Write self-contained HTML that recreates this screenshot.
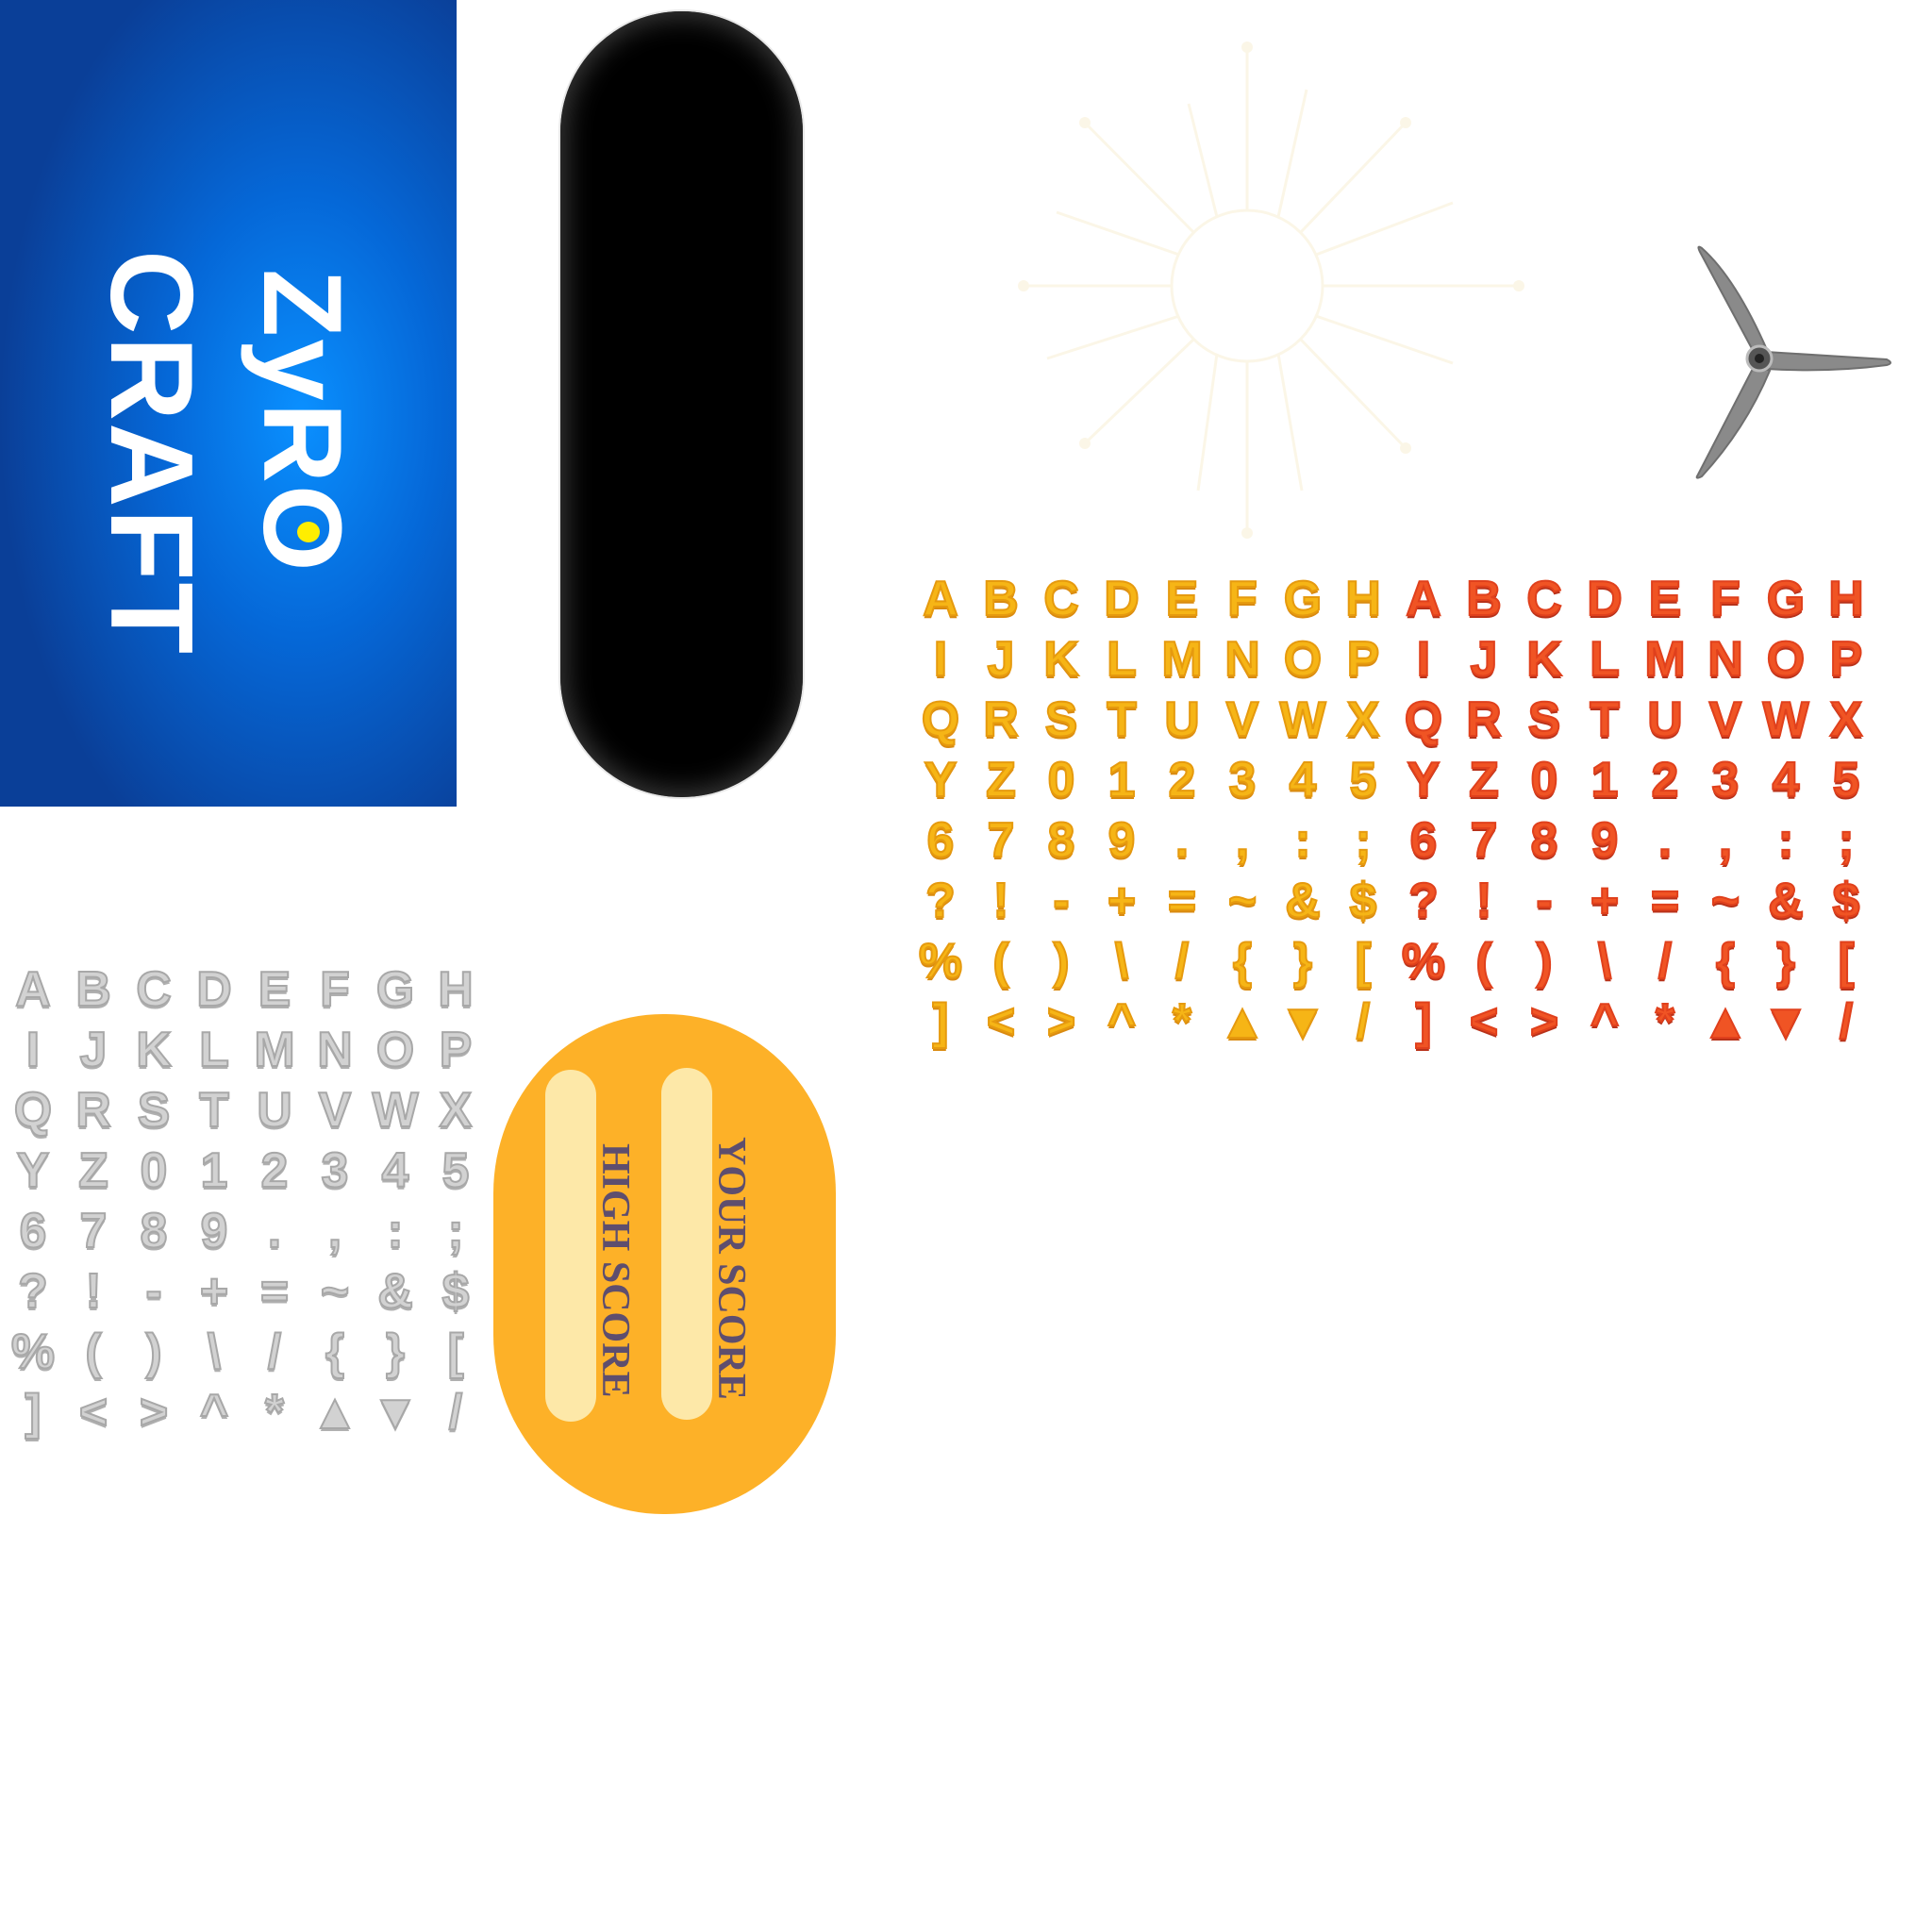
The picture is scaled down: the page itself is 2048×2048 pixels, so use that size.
<!DOCTYPE html>
<html><head><meta charset="utf-8">
<style>
html,body{margin:0;padding:0;background:#fff;}
body{width:2048px;height:2048px;position:relative;overflow:hidden;font-family:"Liberation Sans",sans-serif;}
.abs{position:absolute;}
#blue{left:0;top:0;width:484px;height:855px;background:radial-gradient(ellipse 320px 520px at 320px 440px,#0a90ff 0%,#0568d8 45%,#0a3f98 100%);}
.logo{position:absolute;color:#fff;font-weight:bold;transform:rotate(90deg);transform-origin:center;white-space:nowrap;font-family:"Liberation Sans",sans-serif;letter-spacing:2px;}
#pill{left:594px;top:12px;width:257px;height:833px;border-radius:128px;background:#000;box-shadow:inset 0 0 28px 6px #3a3a3a,0 0 0 2px #e8e8e8;}
.grid{position:absolute;font-weight:900;font-size:52px;line-height:64px;font-family:"Liberation Sans","DejaVu Sans",sans-serif;}
.grid div{display:flex;height:64px;}
.grid span{width:64px;text-align:center;display:inline-block;}
.y{color:#f6b516;-webkit-text-stroke:2px #e69a0e;text-shadow:0 3px 0 #d98a10;}
.r{color:#f05424;-webkit-text-stroke:2px #e0401c;text-shadow:0 3px 0 #b8321a;}
.s{color:#d2d2d2;-webkit-text-stroke:2px #a8a8a8;text-shadow:0 3px 0 #b0b0b0;}
#opill{left:523px;top:1075px;width:363px;height:530px;border-radius:180px / 190px;background:#fdb128;}
.strip{position:absolute;width:54px;border-radius:27px;background:#fde8a8;}
.score{position:absolute;color:#5e4e6e;font-family:"Liberation Serif",serif;font-weight:bold;font-size:42px;white-space:nowrap;transform:rotate(90deg);transform-origin:left top;}
</style></head><body>

<div id="blue" class="abs"></div>
<div class="logo" style="left:160px;top:390px;width:320px;height:110px;font-size:118px;line-height:110px;text-align:center;">ZyRO</div>
<div class="logo" style="left:-10px;top:370px;width:340px;height:130px;font-size:124px;line-height:130px;text-align:center;">CRAFT</div>
<div class="abs" style="left:315px;top:553px;width:24px;height:22px;border-radius:50%;background:#ffee00;"></div>

<div id="pill" class="abs"></div>

<svg class="abs" style="left:1040px;top:20px;opacity:0.45" width="580" height="570" viewBox="0 0 580 570">
<g stroke="#f8eccb" stroke-width="3" fill="none">
<circle cx="282" cy="283" r="80"/>
<path d="M282 203 V30 M282 363 V545 M202 283 H45 M362 283 H570 M225 226 L110 110 M339 226 L450 110 M225 340 L110 450 M339 340 L450 455 M250 210 L220 90 M315 210 L345 75 M210 250 L80 205 M355 250 L500 195 M210 315 L70 360 M355 315 L500 365 M250 355 L230 500 M315 355 L340 500"/>
</g>
<g fill="#f8eccb"><circle cx="282" cy="30" r="6"/><circle cx="110" cy="110" r="6"/><circle cx="450" cy="110" r="6"/><circle cx="45" cy="283" r="6"/><circle cx="570" cy="283" r="6"/><circle cx="110" cy="450" r="6"/><circle cx="450" cy="455" r="6"/><circle cx="282" cy="545" r="6"/></g>
</svg>

<svg class="abs" style="left:1780px;top:255px" width="240" height="260" viewBox="0 0 240 260">
<g fill="#8a8a8a" stroke="#6f6f6f" stroke-width="2">
<path d="M80 120 L22 12 Q18 4 24 8 Q60 40 94 118 Z"/>
<path d="M92 118 L220 126 Q228 130 220 132 Q160 140 92 136 Z"/>
<path d="M80 132 L20 248 Q16 254 24 250 Q70 200 96 138 Z"/>
</g>
<circle cx="85" cy="125" r="13" fill="#555" stroke="#bbb" stroke-width="3"/>
<circle cx="85" cy="125" r="5" fill="#222"/>
</svg>

<div class="grid" style="left:965px;top:603px;">
<div><span class="y">A</span><span class="y">B</span><span class="y">C</span><span class="y">D</span><span class="y">E</span><span class="y">F</span><span class="y">G</span><span class="y">H</span><span class="r">A</span><span class="r">B</span><span class="r">C</span><span class="r">D</span><span class="r">E</span><span class="r">F</span><span class="r">G</span><span class="r">H</span></div>
<div><span class="y">I</span><span class="y">J</span><span class="y">K</span><span class="y">L</span><span class="y">M</span><span class="y">N</span><span class="y">O</span><span class="y">P</span><span class="r">I</span><span class="r">J</span><span class="r">K</span><span class="r">L</span><span class="r">M</span><span class="r">N</span><span class="r">O</span><span class="r">P</span></div>
<div><span class="y">Q</span><span class="y">R</span><span class="y">S</span><span class="y">T</span><span class="y">U</span><span class="y">V</span><span class="y">W</span><span class="y">X</span><span class="r">Q</span><span class="r">R</span><span class="r">S</span><span class="r">T</span><span class="r">U</span><span class="r">V</span><span class="r">W</span><span class="r">X</span></div>
<div><span class="y">Y</span><span class="y">Z</span><span class="y">0</span><span class="y">1</span><span class="y">2</span><span class="y">3</span><span class="y">4</span><span class="y">5</span><span class="r">Y</span><span class="r">Z</span><span class="r">0</span><span class="r">1</span><span class="r">2</span><span class="r">3</span><span class="r">4</span><span class="r">5</span></div>
<div><span class="y">6</span><span class="y">7</span><span class="y">8</span><span class="y">9</span><span class="y">.</span><span class="y">,</span><span class="y">:</span><span class="y">;</span><span class="r">6</span><span class="r">7</span><span class="r">8</span><span class="r">9</span><span class="r">.</span><span class="r">,</span><span class="r">:</span><span class="r">;</span></div>
<div><span class="y">?</span><span class="y">!</span><span class="y">-</span><span class="y">+</span><span class="y">=</span><span class="y">~</span><span class="y">&amp;</span><span class="y">$</span><span class="r">?</span><span class="r">!</span><span class="r">-</span><span class="r">+</span><span class="r">=</span><span class="r">~</span><span class="r">&amp;</span><span class="r">$</span></div>
<div><span class="y">%</span><span class="y">(</span><span class="y">)</span><span class="y">\</span><span class="y">/</span><span class="y">{</span><span class="y">}</span><span class="y">[</span><span class="r">%</span><span class="r">(</span><span class="r">)</span><span class="r">\</span><span class="r">/</span><span class="r">{</span><span class="r">}</span><span class="r">[</span></div>
<div><span class="y">]</span><span class="y">&lt;</span><span class="y">&gt;</span><span class="y">^</span><span class="y">*</span><span class="y">▲</span><span class="y">▼</span><span class="y">/</span><span class="r">]</span><span class="r">&lt;</span><span class="r">&gt;</span><span class="r">^</span><span class="r">*</span><span class="r">▲</span><span class="r">▼</span><span class="r">/</span></div>
</div>

<div class="grid s" style="left:3px;top:1017px;">
<div><span>A</span><span>B</span><span>C</span><span>D</span><span>E</span><span>F</span><span>G</span><span>H</span></div>
<div><span>I</span><span>J</span><span>K</span><span>L</span><span>M</span><span>N</span><span>O</span><span>P</span></div>
<div><span>Q</span><span>R</span><span>S</span><span>T</span><span>U</span><span>V</span><span>W</span><span>X</span></div>
<div><span>Y</span><span>Z</span><span>0</span><span>1</span><span>2</span><span>3</span><span>4</span><span>5</span></div>
<div><span>6</span><span>7</span><span>8</span><span>9</span><span>.</span><span>,</span><span>:</span><span>;</span></div>
<div><span>?</span><span>!</span><span>-</span><span>+</span><span>=</span><span>~</span><span>&amp;</span><span>$</span></div>
<div><span>%</span><span>(</span><span>)</span><span>\</span><span>/</span><span>{</span><span>}</span><span>[</span></div>
<div><span>]</span><span>&lt;</span><span>&gt;</span><span>^</span><span>*</span><span>▲</span><span>▼</span><span>/</span></div>
</div>

<div id="opill" class="abs"></div>
<div class="strip" style="left:578px;top:1134px;height:373px;"></div>
<div class="strip" style="left:701px;top:1132px;height:373px;"></div>
<div class="score" style="left:676px;top:1212px;">HIGH SCORE</div>
<div class="score" style="left:799px;top:1205px;">YOUR SCORE</div>

</body></html>
